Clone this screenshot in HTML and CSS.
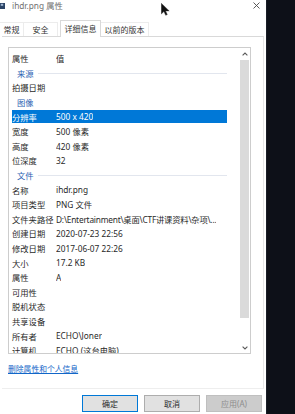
FILE: index.html
```html
<!DOCTYPE html>
<html lang="zh-CN">
<head>
    <meta charset="UTF-8">
    <title>ihdr.png 属性</title>
    <link rel="stylesheet" href="styles.css">
</head>
<body>
    <div class="window">
        <div class="titlebar">
            <svg class="app-icon" width="5" height="6" viewBox="0 0 5 6">
                <rect x="0" y="0" width="5" height="6" fill="#2c4466"/>
                <rect x="0.8" y="0.8" width="2.4" height="2" fill="#9fb6d2"/>
            </svg>
            <span class="title">ihdr.png 属性</span>
            <svg class="close" width="7" height="7" viewBox="0 0 7 7">
                <path d="M0.5 0.5 L6.5 6.5 M6.5 0.5 L0.5 6.5" stroke="#4a4a4a" stroke-width="0.9"/>
            </svg>
        </div>

        <div class="tabs">
            <div class="tab tab-general">常规</div>
            <div class="tab tab-security">安全</div>
            <div class="tab tab-details active">详细信息</div>
            <div class="tab tab-versions">以前的版本</div>
        </div>

        <div class="panel">
            <div class="list">
                <div class="rows">
                    <div class="row"><span class="key">属性</span><span class="val">值</span></div>
                    <div class="group"><span>来源</span><i class="rule"></i></div>
                    <div class="row"><span class="key">拍摄日期</span><span class="val"></span></div>
                    <div class="group"><span>图像</span></div>
                    <div class="row selected"><span class="key">分辨率</span><span class="val">500 x 420</span></div>
                    <div class="row"><span class="key">宽度</span><span class="val">500 像素</span></div>
                    <div class="row"><span class="key">高度</span><span class="val">420 像素</span></div>
                    <div class="row"><span class="key">位深度</span><span class="val">32</span></div>
                    <div class="group"><span>文件</span><i class="rule"></i></div>
                    <div class="row"><span class="key">名称</span><span class="val">ihdr.png</span></div>
                    <div class="row"><span class="key">项目类型</span><span class="val">PNG 文件</span></div>
                    <div class="row"><span class="key">文件夹路径</span><span class="val path">D:\Entertainment\桌面\CTF讲课资料\杂项\...</span></div>
                    <div class="row"><span class="key">创建日期</span><span class="val">2020-07-23 22:56</span></div>
                    <div class="row"><span class="key">修改日期</span><span class="val">2017-06-07 22:26</span></div>
                    <div class="row"><span class="key">大小</span><span class="val">17.2 KB</span></div>
                    <div class="row"><span class="key">属性</span><span class="val">A</span></div>
                    <div class="row"><span class="key">可用性</span><span class="val"></span></div>
                    <div class="row"><span class="key">脱机状态</span><span class="val"></span></div>
                    <div class="row"><span class="key">共享设备</span><span class="val"></span></div>
                    <div class="row"><span class="key">所有者</span><span class="val">ECHO\Joner</span></div>
                    <div class="row"><span class="key">计算机</span><span class="val">ECHO (这台电脑)</span></div>
                </div>
                <div class="scrollbar">
                    <div class="arrow">
                        <svg width="6" height="4" viewBox="0 0 6 4"><path d="M0.6 3.4 L3 1 L5.4 3.4" fill="none" stroke="#5a5a5a" stroke-width="1.1"/></svg>
                    </div>
                    <div class="thumb"></div>
                    <div class="track"></div>
                    <div class="arrow">
                        <svg width="6" height="4" viewBox="0 0 6 4"><path d="M0.6 0.6 L3 3 L5.4 0.6" fill="none" stroke="#5a5a5a" stroke-width="1.1"/></svg>
                    </div>
                </div>
            </div>
            <a class="remove-link" href="#">删除属性和个人信息</a>
        </div>

        <div class="buttons">
            <button class="btn primary">确定</button>
            <button class="btn">取消</button>
            <button class="btn" disabled>应用(A)</button>
        </div>

        <!-- mouse pointer over the title bar -->
        <svg class="cursor" width="9" height="13" viewBox="0 0 9 13">
            <path d="M0.3 0.3 L0.3 11 L2.9 8.5 L4.7 12.3 L6.3 11.6 L4.6 7.9 L8.2 7.9 Z" fill="#111" stroke="#333" stroke-width="0.4"/>
        </svg>
    </div>
    <div class="desktop"></div>
</body>
</html>
```

FILE: styles.css
```css
* {
    margin: 0;
    padding: 0;
    box-sizing: border-box;
}

body {
    width: 295px;
    height: 414px;
    display: flex;
    overflow: hidden;
    background: #0d1018;
    font-family: "Noto Sans", "Noto Sans CJK SC", sans-serif;
    color: #2a2a2a;
}

.window {
    width: 266px;
    height: 414px;
    background: #fff;
    display: flex;
    flex-direction: column;
    position: relative;
}

.desktop {
    flex: 1;
    background: #0d1018;
    border-left: 1px solid #1a1e27;
}

/* title bar */
.titlebar {
    height: 11px;
    display: flex;
    align-items: center;
}

.app-icon {
    display: block;
    margin-top: 1px;
}

.title {
    margin-left: 7px;
    font-size: 8.3px;
    line-height: 10px;
    color: #707070;
}

.close {
    display: block;
    margin-left: auto;
    margin-right: 6px;
    margin-top: 0;
}

/* tabs */
.tabs {
    height: 25px;
    display: flex;
    align-items: flex-end;
    font-size: 8px;
    position: relative;
    z-index: 2;
}

.tab {
    height: 14px;
    line-height: 13px;
    text-align: center;
    white-space: nowrap;
    color: #333;
    border: 1px solid #ececec;
    border-bottom: none;
}

.tab-general {
    width: 24px;
    border-left: none;
}

.tab-security {
    width: 34px;
    border-left: none;
}

.tab-details {
    width: 41px;
    margin-left: 2px;
}

.tab-versions {
    width: 48px;
    border-left: none;
}

.tab.active {
    height: 17px;
    line-height: 15px;
    margin-bottom: -1px;
    background: #fff;
    border-color: #d9d9d9;
}

/* tab panel */
.panel {
    height: 353px;
    margin: 0 2px;
    padding: 10px 0 0 6px;
    border-top: 1px solid #d9d9d9;
    border-right: 1px solid #e6e6e6;
    border-bottom: 1px solid #eeeeee;
}

.list {
    width: 243px;
    height: 307px;
    border: 1px solid #cdcdcd;
    display: flex;
    justify-content: space-between;
}

.rows {
    width: 218px;
    padding: 3px 0 0 2px;
    overflow: hidden;
}

.row {
    height: 14.6px;
    display: flex;
    align-items: center;
    padding: 1px 0 1px 1px;
    font-size: 8.3px;
    white-space: nowrap;
}

.row .key {
    width: 44px;
    flex-shrink: 0;
}

.row .val {
    overflow: hidden;
}

.row .path {
    letter-spacing: -0.2px;
}

.row.selected {
    background: #0078d7;
    background-clip: content-box;
    color: #fff;
}

.group {
    height: 14.6px;
    display: flex;
    align-items: center;
    padding-left: 6px;
    font-size: 8.3px;
    color: #2d5fb2;
}

.group .rule {
    flex: 1;
    height: 1px;
    margin: 1px -4px 0 4px;
    background: #e2e6ee;
}

.scrollbar {
    width: 11px;
    display: flex;
    flex-direction: column;
}

.scrollbar .arrow {
    height: 11px;
    display: flex;
    align-items: center;
    justify-content: center;
}

.scrollbar .thumb {
    height: 258px;
    margin: 1px 1px 0 1px;
    background: #dadada;
}

.scrollbar .track {
    flex: 1;
}

.remove-link {
    display: block;
    width: fit-content;
    margin-top: 10px;
    font-size: 7.8px;
    line-height: 10px;
    color: #1166c8;
    text-decoration: underline;
}

/* dialog buttons */
.buttons {
    display: flex;
    justify-content: flex-end;
    gap: 6px;
    padding-right: 4px;
    margin-top: 6px;
}

.btn {
    width: 56px;
    height: 17px;
    font-family: "Noto Sans", "Noto Sans CJK SC", sans-serif;
    font-size: 8px;
    color: #2a2a2a;
    background: #e1e1e1;
    border: 1px solid #adadad;
}

.btn.primary {
    border-color: #0078d7;
}

.btn:disabled {
    background: #cccccc;
    border-color: #bfbfbf;
    color: #8c8c8c;
}

.cursor {
    position: absolute;
    left: 161px;
    top: 3px;
}
```
